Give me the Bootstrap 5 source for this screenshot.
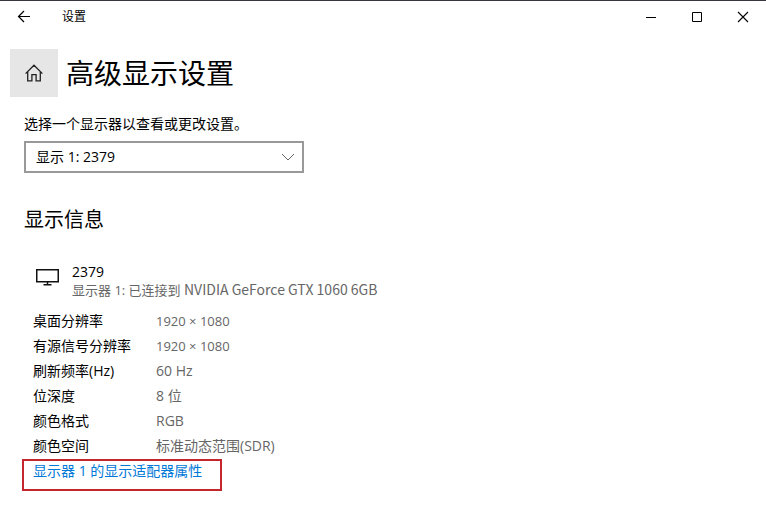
<!DOCTYPE html>
<html lang="zh-CN">
<head>
<meta charset="utf-8">
<meta name="viewport" content="width=device-width, initial-scale=1">
<title>设置</title>
<link href="https://cdn.jsdelivr.net/npm/bootstrap@5.3.0/dist/css/bootstrap.min.css" rel="stylesheet">
<style>
body{font-family:"Open Sans","Noto Sans CJK SC",sans-serif;font-size:14px;line-height:20px;color:#000;background:#fff;border-top:1px solid #36373c}
.title-bar{height:32px}
.title-bar .btn{width:46px;height:32px;border-radius:0;color:#000}
.title-bar .back-btn{width:48px}
.app-name{font-size:12px;margin-left:14px}
.page-head{margin:16px 10px 0;gap:8px}
.home-btn{width:48px;height:48px;background:#e6e6e6;border-radius:0;color:#000}
.page-title{font-size:28px;line-height:40px;font-weight:400}
.picker{margin:17px 24px 0}
.picker .form-label{margin-bottom:7px}
.picker .form-select{max-width:280px;height:32px;border:2px solid #999;border-radius:0;padding:0 36px 0 10px;font-size:14px;line-height:20px;color:#000;background-position:right 7px center;background-size:14px 14px;--bs-form-select-bg-img:url("data:image/svg+xml,%3Csvg xmlns='http://www.w3.org/2000/svg' viewBox='0 0 14 14'%3E%3Cpath d='M1 4l6 6 6-6' fill='none' stroke='%23666'/%3E%3C/svg%3E")}
.section-title{font-size:20px;line-height:28px;font-weight:400;margin:33px 24px 0}
.device{margin:29px 24px 0 35px;gap:12px;line-height:18px}
.device svg{margin-top:4px}
.device-note{font-size:13px}
.gpu-name{font-family:"Noto Sans CJK SC",sans-serif;font-size:14px;line-height:14px}
.soft{color:#666}
.specs{margin:9px 24px 1px 33px}
.specs th,.specs td{height:25px;padding:0;font-weight:400;text-align:left}
.specs th{width:123px}
.specs .resolution{font-size:13px}
.adapter-box{margin:0 22px;padding:0 18px 8px 9px;border:2px solid #c4262e}
.adapter-box a{color:#0078d7;text-decoration:none}
</style>
<script src="https://cdn.jsdelivr.net/npm/bootstrap@5.3.0/dist/js/bootstrap.bundle.min.js" defer></script>
</head>
<body>
<header class="title-bar d-flex align-items-center">
  <button type="button" class="btn back-btn p-0 d-flex align-items-center justify-content-center" aria-label="返回">
    <svg width="14" height="14" viewBox="0 0 14 14" fill="none" stroke="currentColor" stroke-width="1.2"><path d="M13 6.5H1.5M7 1L1.5 6.5 7 12"/></svg>
  </button>
  <span class="app-name">设置</span>
  <div class="d-flex ms-auto">
    <button type="button" class="btn p-0 d-flex align-items-center justify-content-center" aria-label="最小化"><svg width="12" height="12" viewBox="0 0 12 12" fill="none" stroke="currentColor"><path d="M1 6.5h10"/></svg></button>
    <button type="button" class="btn p-0 d-flex align-items-center justify-content-center" aria-label="最大化"><svg width="12" height="12" viewBox="0 0 12 12" fill="none" stroke="currentColor"><path d="M1.5 1.5h9v9h-9z"/></svg></button>
    <button type="button" class="btn p-0 d-flex align-items-center justify-content-center" aria-label="关闭"><svg width="12" height="12" viewBox="0 0 12 12" fill="none" stroke="currentColor" stroke-width="1.1"><path d="M1 1l10 10M11 1L1 11"/></svg></button>
  </div>
</header>
<main>
  <div class="page-head d-flex align-items-center">
    <button type="button" class="btn home-btn p-0 d-flex align-items-center justify-content-center" aria-label="主页">
      <svg width="18" height="18" viewBox="0 0 18 18" fill="none" stroke="#222" stroke-width="1.3"><path d="M.6 9.6L9 1.2l8.400 8.400M2.700 7.600v9.300h4.200v-6.200h4.200v6.200h4.200V7.600"/></svg>
    </button>
    <h1 class="page-title mb-0">高级显示设置</h1>
  </div>
  <div class="picker">
    <label class="form-label d-block" for="display">选择一个显示器以查看或更改设置。</label>
    <select class="form-select" id="display"><option>显示 1: 2379</option></select>
  </div>
  <h2 class="section-title">显示信息</h2>
  <div class="device d-flex align-items-start">
    <svg width="25" height="20" viewBox="0 0 25 20" fill="none" stroke="#111" stroke-width="1.500"><path d="M1.750 2.750h21.500v12H1.750zM12.500 14.750v3M8.500 17.750h8"/></svg>
    <div>
      <div>2379</div>
      <div class="device-note soft">显示器 1: 已连接到 <span class="gpu-name">NVIDIA GeForce GTX 1060 6GB</span></div>
    </div>
  </div>
  <table class="specs">
    <tbody>
      <tr><th scope="row">桌面分辨率</th><td class="soft resolution">1920 × 1080</td></tr>
      <tr><th scope="row">有源信号分辨率</th><td class="soft resolution">1920 × 1080</td></tr>
      <tr><th scope="row">刷新频率(Hz)</th><td class="soft">60 Hz</td></tr>
      <tr><th scope="row">位深度</th><td class="soft">8 位</td></tr>
      <tr><th scope="row">颜色格式</th><td class="soft">RGB</td></tr>
      <tr><th scope="row">颜色空间</th><td class="soft">标准动态范围(SDR)</td></tr>
    </tbody>
  </table>
  <div class="adapter-box d-inline-block"><a href="#adapter">显示器 1 的显示适配器属性</a></div>
</main>
</body>
</html>
